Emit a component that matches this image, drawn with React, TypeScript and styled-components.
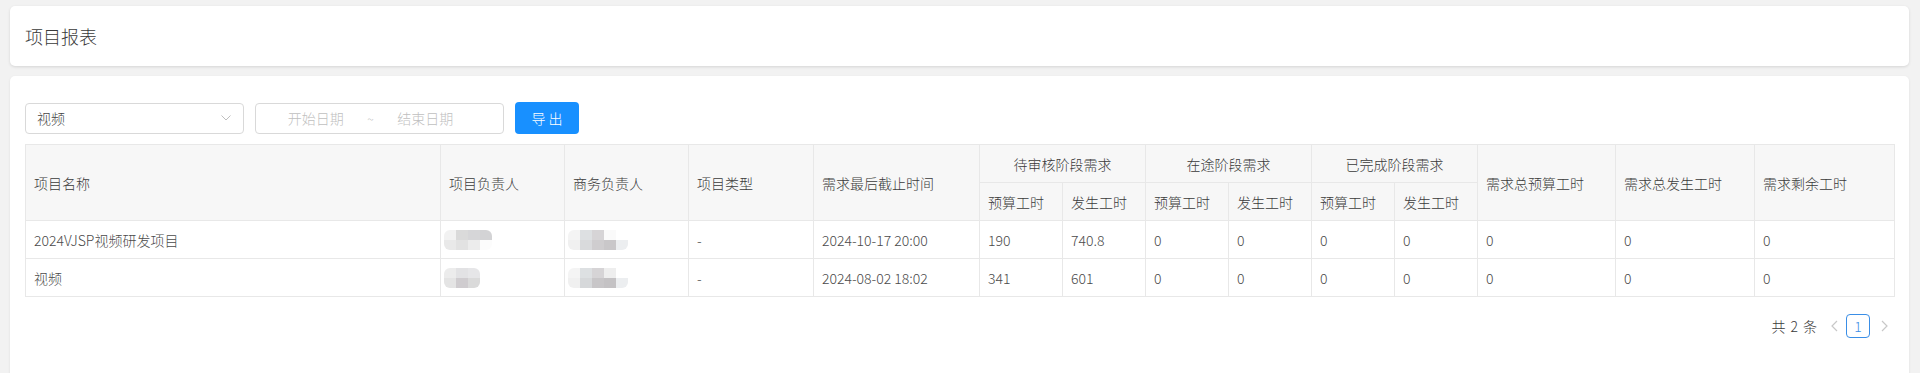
import styled, { createGlobalStyle } from "styled-components";

const GlobalStyle = createGlobalStyle`
  html, body {
    margin: 0;
    padding: 0;
    background: #f2f2f2;
  }
  body {
    font-family: "Noto Sans CJK SC", "Noto Sans", sans-serif;
    font-size: 14px;
    font-weight: 300;
    color: #333;
  }
  * {
    box-sizing: border-box;
  }
`;

type TRow = {
  name: string;
  owner: string[][];
  business: string[][];
  type: string;
  deadline: string;
  values: string[];
};

const rows: TRow[] = [
  {
    name: "2024VJSP视频研发项目",
    owner: [
      ["#f2f2f2", "#dadada", "#d6d6d8", "#d3d3d5"],
      ["#e9e9e9", "#e2e2e2", "#ececec", "#fcfcfc"],
    ],
    business: [
      ["#f4f4f4", "#dde0e2", "#d6d4d6", "#fafafa", "#ffffff"],
      ["#f0f0f0", "#d9dadc", "#cfcdcf", "#c9c7c9", "#eceef0"],
    ],
    type: "-",
    deadline: "2024-10-17 20:00",
    values: ["190", "740.8", "0", "0", "0", "0", "0", "0", "0"],
  },
  {
    name: "视频",
    owner: [
      ["#ececec", "#e2e2e4", "#e6e6e8"],
      ["#e4e4e4", "#cfcccf", "#dadada"],
    ],
    business: [
      ["#f4f4f4", "#dde0e2", "#d6d4d6", "#eeeeee", "#ffffff"],
      ["#f0f0f0", "#d6d8da", "#c8c6c8", "#c4c2c4", "#eceef0"],
    ],
    type: "-",
    deadline: "2024-08-02 18:02",
    values: ["341", "601", "0", "0", "0", "0", "0", "0", "0"],
  },
];

const colWidths = [415, 124, 124, 125, 166, 83, 83, 83, 83, 83, 83, 138, 139, 140];

const groups = ["待审核阶段需求", "在途阶段需求", "已完成阶段需求"];

const App = () => {
  return (
    <PageStyle>
      <GlobalStyle />
      <CardStyle>
        <TitleStyle>项目报表</TitleStyle>
      </CardStyle>
      <ContentCardStyle>
        <ToolbarStyle>
          <SelectStyle>
            <span>视频</span>
            <svg width="10" height="6" viewBox="0 0 10 6">
              <polyline
                points="0.5,0.5 5,5 9.5,0.5"
                fill="none"
                stroke="#bfbfbf"
                strokeWidth="1"
              />
            </svg>
          </SelectStyle>
          <RangeStyle>
            <RangeInputStyle>开始日期</RangeInputStyle>
            <SeparatorStyle>~</SeparatorStyle>
            <RangeInputStyle>结束日期</RangeInputStyle>
          </RangeStyle>
          <ButtonStyle>导 出</ButtonStyle>
        </ToolbarStyle>

        <TableStyle>
          <colgroup>
            {colWidths.map((w, i) => (
              <col key={i} style={{ width: w }} />
            ))}
          </colgroup>
          <thead>
            <tr>
              <ThStyle rowSpan={2}>项目名称</ThStyle>
              <ThStyle rowSpan={2}>项目负责人</ThStyle>
              <ThStyle rowSpan={2}>商务负责人</ThStyle>
              <ThStyle rowSpan={2}>项目类型</ThStyle>
              <ThStyle rowSpan={2}>需求最后截止时间</ThStyle>
              {groups.map((g) => (
                <ThStyle key={g} colSpan={2} $center>
                  {g}
                </ThStyle>
              ))}
              <ThStyle rowSpan={2}>需求总预算工时</ThStyle>
              <ThStyle rowSpan={2}>需求总发生工时</ThStyle>
              <ThStyle rowSpan={2}>需求剩余工时</ThStyle>
            </tr>
            <tr>
              {groups.map((g) => [
                <ThStyle key={g + "a"}>预算工时</ThStyle>,
                <ThStyle key={g + "b"}>发生工时</ThStyle>,
              ])}
            </tr>
          </thead>
          <tbody>
            {rows.map((row) => (
              <tr key={row.name}>
                <TdStyle>{row.name}</TdStyle>
                <TdStyle>
                  <Mosaic cells={row.owner} />
                </TdStyle>
                <TdStyle>
                  <Mosaic cells={row.business} />
                </TdStyle>
                <TdStyle>{row.type}</TdStyle>
                <TdStyle>{row.deadline}</TdStyle>
                {row.values.map((v, i) => (
                  <TdStyle key={i}>{v}</TdStyle>
                ))}
              </tr>
            ))}
          </tbody>
        </TableStyle>

        <PaginationStyle>
          <TotalStyle>
            共<b>2</b>条
          </TotalStyle>
          <ArrowStyle>
            <svg width="7" height="12" viewBox="0 0 7 12">
              <polyline points="6,1 1,6 6,11" fill="none" stroke="#c8c8c8" strokeWidth="1.2" />
            </svg>
          </ArrowStyle>
          <PageItemStyle $active>1</PageItemStyle>
          <ArrowStyle>
            <svg width="7" height="12" viewBox="0 0 7 12">
              <polyline points="1,1 6,6 1,11" fill="none" stroke="#c8c8c8" strokeWidth="1.2" />
            </svg>
          </ArrowStyle>
        </PaginationStyle>
      </ContentCardStyle>
    </PageStyle>
  );
};

const Mosaic = ({ cells }: { cells: string[][] }) => (
  <MosaicStyle $cols={cells[0].length}>
    {cells.flat().map((c, i) => (
      <MosaicCellStyle key={i} $color={c} />
    ))}
  </MosaicStyle>
);

export default App;

const PageStyle = styled.div`
  padding: 6px 11px 0 10px;
  display: flex;
  flex-direction: column;
  gap: 10px;
`;

const CardStyle = styled.div`
  background: #fff;
  border-radius: 5px;
  box-shadow: 0 1px 3px rgba(0, 0, 0, 0.12);
  height: 60px;
  display: flex;
  align-items: center;
  padding: 0 15px;
`;

const TitleStyle = styled.div`
  font-size: 18px;
  color: #3a3a3a;
  line-height: 1;
`;

const ContentCardStyle = styled.div`
  background: #fff;
  border-radius: 5px;
  box-shadow: 0 1px 3px rgba(0, 0, 0, 0.08);
  padding: 26px 15px 60px;
`;

const ToolbarStyle = styled.div`
  display: flex;
  align-items: center;
  gap: 11px;
  height: 32px;
`;

const SelectStyle = styled.div`
  width: 219px;
  height: 31px;
  border: 1px solid #d9d9d9;
  border-radius: 4px;
  display: flex;
  align-items: center;
  justify-content: space-between;
  padding: 0 12px 0 11px;
  color: #444;

  svg {
    display: block;
  }
`;

const RangeStyle = styled.div`
  width: 249px;
  height: 31px;
  border: 1px solid #d9d9d9;
  border-radius: 4px;
  display: flex;
  align-items: center;
  padding: 0 30px 0 12px;
`;

const RangeInputStyle = styled.div`
  flex: 1;
  text-align: center;
  color: #bfbfbf;
`;

const SeparatorStyle = styled.div`
  color: #bfbfbf;
  width: 14px;
  text-align: center;
  font-size: 12px;
`;

const ButtonStyle = styled.button`
  width: 64px;
  height: 32px;
  border: none;
  border-radius: 4px;
  background: #1890ff;
  color: #fff;
  font-family: inherit;
  font-size: 14px;
  font-weight: 300;
  cursor: pointer;
  padding: 0;
`;

const TableStyle = styled.table`
  margin-top: 10px;
  width: 100%;
  table-layout: fixed;
  border-collapse: collapse;
  border: 1px solid #e8e8e8;
`;

const ThStyle = styled.th<{ $center?: boolean }>`
  height: 38px;
  padding: 0 8px;
  background: #f7f7f7;
  border: 1px solid #e8e8e8;
  font-weight: 300;
  color: #3a3a3a;
  text-align: ${({ $center }) => ($center ? "center" : "left")};
  vertical-align: middle;
  white-space: nowrap;
`;

const TdStyle = styled.td`
  height: 38px;
  padding: 0 8px;
  border: 1px solid #e8e8e8;
  color: #4a4a4a;
  vertical-align: middle;
  white-space: nowrap;
`;

const MosaicStyle = styled.div<{ $cols: number }>`
  display: grid;
  grid-template-columns: repeat(${({ $cols }) => $cols}, 12px);
  grid-auto-rows: 10px;
  margin-left: -5px;
  filter: blur(0.6px);
  border-radius: 6px;
  overflow: hidden;
  width: max-content;
`;

const MosaicCellStyle = styled.div<{ $color: string }>`
  background: ${({ $color }) => $color};
`;

const PaginationStyle = styled.div`
  display: flex;
  justify-content: flex-end;
  align-items: center;
  margin-top: 17px;
  height: 24px;
`;

const TotalStyle = styled.span`
  color: #3a3a3a;
  margin-right: 11px;

  b {
    font-weight: inherit;
    margin: 0 5px;
  }
`;

const ArrowStyle = styled.span`
  display: flex;
  align-items: center;
  justify-content: center;
  width: 12px;
  height: 24px;

  &:nth-child(2) {
    margin-right: 6px;
  }

  &:last-child {
    margin-left: 8px;
    margin-right: 4px;
  }
`;

const PageItemStyle = styled.span<{ $active?: boolean }>`
  width: 24px;
  height: 24px;
  border-radius: 4px;
  border: 1px solid ${({ $active }) => ($active ? "#3a8ee6" : "#d9d9d9")};
  color: ${({ $active }) => ($active ? "#3a8ee6" : "#333")};
  display: flex;
  align-items: center;
  justify-content: center;
  font-size: 14px;
`;
